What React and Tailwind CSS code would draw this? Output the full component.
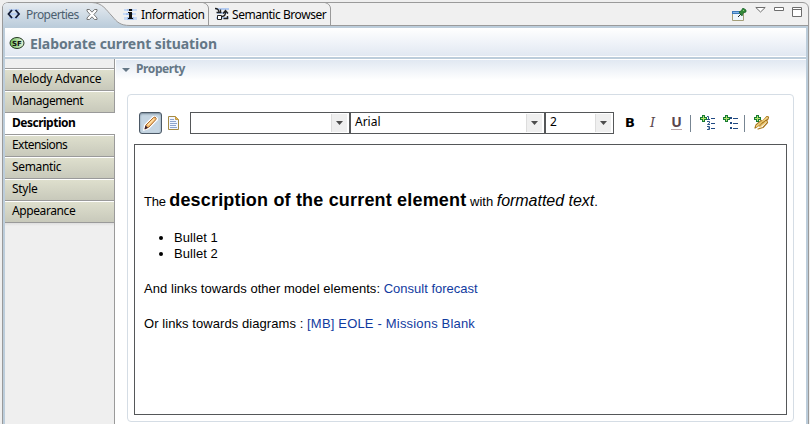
import React from "react";

const ui = "font-['Noto_Sans',sans-serif] text-black";

function CodeIcon() {
  return (
    <svg width="14" height="14" viewBox="0 0 14 14" className="shrink-0">
      <path d="M2 2h10v2H2zM1 6h12v2H1zM2 10h10v2H2z" fill="#b8cdf0" />
      <path d="M5 3L1.5 7L5 11M8.5 3L12 7L8.5 11" fill="none" stroke="#111a35" strokeWidth="1.8" />
    </svg>
  );
}

function InfoIcon() {
  return (
    <svg width="15" height="13" viewBox="0 0 15 13" className="shrink-0">
      <path d="M1 1h13v2H1zM0 5h13v2H0zM1 9h13v3H1z" fill="#c8daf6" />
      <path d="M4 1h6v2H4zM3 5h7v2H3zM4 9h7v3H4z" fill="#a5c1ee" />
      <path d="M6 1h3v2H6zM5 4h4v6h1v1H5v-1h1V5H5z" fill="#111" />
    </svg>
  );
}

function BrowserIcon() {
  return (
    <svg width="16" height="14" viewBox="0 0 16 14" className="shrink-0">
      <path d="M2 1h13v2H2zM3 5h11v2H3zM2 10h13v2H2z" fill="#b3cbf1" />
      <path d="M1 1.5C4 1.5 5 3 5 5.500M2.500 5.500H7.500M6.500 2.500V6" fill="none" stroke="#222" strokeWidth="1.300" />
      <path d="M3.500 8.500h4v4h-4z" fill="#fff" stroke="#222" />
      <path d="M8 9.500C10.500 9.500 11.500 8 11.500 5M9 6.500L11.500 3.500L14 6.500M9.500 11.500H13.500V9" fill="none" stroke="#222" strokeWidth="1.400" />
    </svg>
  );
}

function CloseIcon() {
  return (
    <svg width="12" height="11" viewBox="0 0 12 11" className="shrink-0">
      <path d="M1 .5H3.500L6 3.200L8.500 .5H11V2L7.900 5.500L11 9V10.500H8.500L6 7.800L3.500 10.500H1V9L4.100 5.500L1 2Z" fill="#fff" stroke="#6b6b6b" strokeWidth=".9" />
    </svg>
  );
}

function PinIcon() {
  return (
    <svg width="15" height="14" viewBox="0 0 15 14">
      <path d="M.5 3.500h11v9H.5z" fill="#edf6fb" stroke="#a39e78" />
      <path d="M0 3h8v3H0z" fill="#3b78ba" />
      <path d="M1 4h6v1H1z" fill="#84b8e7" />
      <path d="M6 9l3-3" stroke="#222" />
      <path d="M7 4l2-1 2-3 3 2v2l-3 1-1 3z" fill="#328a38" stroke="#145e25" strokeWidth=".7" />
      <path d="M11 2l1 1" stroke="#8bd077" />
    </svg>
  );
}

function Tabs() {
  return (
    <div className="relative h-[28px] shrink-0">
      <svg width="810" height="28" viewBox="0 0 810 28" className="absolute left-0 top-0">
        <defs>
          <linearGradient id="tab" x1="0" y1="0" x2="0" y2="1">
            <stop offset="0" stopColor="#e6ebf0" />
            <stop offset="1" stopColor="#b9cbda" />
          </linearGradient>
        </defs>
        <path d="M2.500 28V7Q3 3 7.500 2.500H803Q808 3 808.500 8V28" fill="#f0f0f0" stroke="#9a9a9a" />
        <path d="M3 28V7Q3 3 8 3H92C103 3 106 10 112 16C117 22 120 25.500 130 25.500V28Z" fill="url(#tab)" />
        <path d="M92 2.500C103 3 106 10 112 16C117 22 120 25.500 130 25.500H808" fill="none" stroke="#9a9a9a" />
        <path d="M3 26H808V28H3Z" fill="#bccddb" />
        <path d="M203 2.500Q208 4 208.500 8V25M325 2.500Q330 4 330.500 8V25" fill="none" stroke="#9a9a9a" />
      </svg>
      <div className={`relative flex h-[28px] items-center text-[12px] leading-[16px] ${ui}`}>
        <div className="ml-[7px] flex w-[116px] items-center">
          <CodeIcon />
          <span className="ml-[5px] w-[60px] whitespace-nowrap pt-px tracking-[-0.55px] text-[#4c5f70]">Properties</span>
          <CloseIcon />
        </div>
        <div className="flex w-[91px] items-center">
          <InfoIcon />
          <span className="ml-[3px] whitespace-nowrap pt-px tracking-[-0.39px]">Information</span>
        </div>
        <div className="flex items-center">
          <BrowserIcon />
          <span className="ml-[2px] whitespace-nowrap pt-px tracking-[-0.45px]">Semantic Browser</span>
        </div>
        <div className="ml-auto mr-[7px] flex h-[28px] items-start">
          <div className="mr-[8px] mt-[8px]"><PinIcon /></div>
          <svg width="48" height="12" viewBox="0 0 48 12" className="mt-[6px]">
            <path d="M.8 1.500H10.200L5.500 6Z M19.500 1.500h9v3h-9z M37.500 1.500h9v9h-9z M37.500 3.500h9" fill="#fff" stroke="#6d6d6d" />
          </svg>
        </div>
      </div>
    </div>
  );
}

const items = [
  { name: "Melody Advance", tracking: "tracking-[-0.22px]" },
  { name: "Management", tracking: "tracking-[-0.45px]" },
  { name: "Description", tracking: "tracking-[-0.5px]", selected: true },
  { name: "Extensions", tracking: "tracking-[-0.55px]" },
  { name: "Semantic", tracking: "tracking-[-0.35px]" },
  { name: "Style", tracking: "tracking-[-0.3px]" },
  { name: "Appearance", tracking: "tracking-[-0.4px]" },
];

function Sidebar() {
  return (
    <div className={`flex w-[110px] shrink-0 flex-col bg-[#efefef] text-[12px] leading-[19px] ${ui}`}>
      <div className="h-[10px] shrink-0 border-b border-r border-[#9a9a9a]" />
      {items.map(({ name, tracking, selected }) =>
        selected ? (
          <div key={name} className={`h-[22px] border-b border-b-[#9a9a9a] bg-white pl-[7px] font-bold ${tracking}`}>{name}</div>
        ) : (
          <div
            key={name}
            className={`h-[22px] whitespace-nowrap border-b border-r border-[#9a9a9a] bg-[linear-gradient(to_bottom,#fff_1px,#dedfcd_1px,#c8c9bb)] pl-[7px] ${tracking}`}
          >
            {name}
          </div>
        )
      )}
      <div className="flex-1 border-r border-[#9a9a9a] bg-[linear-gradient(to_bottom,#dedede,#efefef_3px)]" />
    </div>
  );
}

function Combo({ value, width }) {
  return (
    <div className={`flex h-[22px] shrink-0 border border-[#555759] bg-white ${width}`}>
      <span className={`flex-1 pl-[4px] text-[12px] leading-[18px] ${ui}`}>{value}</span>
      <div className="mr-[2px] mt-px flex h-[18px] w-[16px] items-center justify-center border-l border-[#ddd] bg-[#efefef]">
        <svg width="7" height="4" viewBox="0 0 7 4"><path d="M0 0H7L3.500 4Z" fill="#4c4c4c" /></svg>
      </div>
    </div>
  );
}

function Plus() {
  return (
    <>
      <path d="M2 0h3v2h2v3H5v2H2V5H0V2h2z" fill="#167b32" />
      <path d="M3 1h1v2h2v1H4v2H3V4H1V3h2z" fill="#b5e36c" />
    </>
  );
}

function Toolbar() {
  return (
    <div className="ml-[11px] mt-[17px] flex h-[22px] items-center">
      <div className="flex h-[22px] w-[23px] items-center justify-center rounded-[3px] border border-[#4b5865] bg-[#c5d5e2] shadow-[inset_0_1px_2px_#788a99]">
        <svg width="15" height="15" viewBox="0 0 15 15">
          <path d="M0 15l1-6L10 0h2l3 2v2L6 13z" fill="#fff" />
          <path d="M2 13l1-4L10.500 1.500l1.500-.5 1.200 1.300-.4 1.400L6 11z" fill="#f5bd73" stroke="#a05d22" strokeWidth=".9" />
          <path d="M5 9l6-6" stroke="#ffe3ac" strokeWidth="1.300" />
          <path d="M1.500 13.500l1-4L5 11.800z" fill="#352032" />
        </svg>
      </div>
      <svg width="11" height="14" viewBox="0 0 11 14" className="ml-[6px]">
        <path d="M.5.5H7.500L10.500 3.500V13.500H.5Z" fill="#f2f6ff" stroke="#a48a45" />
        <path d="M7.500 .5V3.500H10.500Z" fill="#e4b657" stroke="#c39a45" />
        <path d="M2 3.500h4M2 5.500h6M2 7.500h7M2 9.500h6M2 11.500h7" stroke="#8da4cc" />
      </svg>
      <div className="ml-[11px] flex">
        <Combo value="" width="w-[160px]" />
        <Combo value="Arial" width="w-[195px]" />
        <Combo value="2" width="w-[69px]" />
      </div>
      <span className="ml-[11px] w-[24px] font-['DejaVu_Sans',sans-serif] text-[13px] font-bold leading-[20px] text-black">B</span>
      <span className="w-[22px] pl-px font-['DejaVu_Serif',serif] text-[13px] italic leading-[20px] text-[#5a464d]">I</span>
      <span className="-mt-px flex h-[14px] w-[11px] justify-center border-b border-[#b9a3a6] font-['Open_Sans',sans-serif] text-[14px] font-bold leading-[12px] text-[#5a464d]">U</span>
      <div className="ml-[8px] h-[17px] w-px bg-[#778592]" />
      <svg width="16" height="16" viewBox="0 0 16 16" className="ml-[9px]">
        <path d="M7 1.500h1.500V4M7 4.500h3M7 6.500h2.500V8L7.500 9.500H10M7 11.500h2.500v3H7M8 13h1.500" fill="none" stroke="#2d5588" />
        <path d="M11 3.500h4M11 8.500h4M11 13.500h4" stroke="#204982" />
        <Plus />
      </svg>
      <svg width="16" height="16" viewBox="0 0 16 16" className="ml-[7px]">
        <path d="M7 2h2v2H7zM7 7h2v2H7zM7 12h2v2H7z" fill="#204982" />
        <path d="M10 3.500h5M10 8.500h5M10 13.500h5" stroke="#204982" />
        <Plus />
      </svg>
      <div className="ml-[5px] h-[17px] w-px bg-[#778592]" />
      <svg width="16" height="16" viewBox="0 0 16 16" className="ml-[9px]">
        <g fill="none" strokeLinecap="round" strokeLinejoin="round">
          <path d="M4 14L9 12.500L13.500 7.500L12.500 5L8 8M1 13L2 10L7 5.500L8.500 7L4 11Z" stroke="#a8751a" strokeWidth="1.200" />
          <path d="M5 10L13 1.500L14.500 2L14 4L6 11.500" stroke="#a8751a" strokeWidth="1.200" />
          <path d="M2.500 11.500L13 2.500M6 12L12 6.500" stroke="#f4cf70" strokeWidth="1.100" />
        </g>
        <Plus />
      </svg>
    </div>
  );
}

function Editor() {
  return (
    <div className="ml-[6px] mt-[10px] h-[271px] w-[653px] border border-[#555759] bg-white pl-[9px] pt-[43px] font-['Liberation_Sans',Arial,sans-serif] text-[13px] text-black">
      <div className="h-[24px] whitespace-nowrap leading-[24px]">
        <span className="tracking-[-0.2px]">The </span><b className="text-[18px] tracking-[0.18px]">description of the current element</b><span> with </span><i className="text-[16px] tracking-[-0.03px]">formatted text</i>.
      </div>
      <ul className="mt-[18px] list-disc pl-[30px] leading-[16px] tracking-[0.07px]">
        <li>Bullet 1</li>
        <li>Bullet 2</li>
      </ul>
      <p className="mt-[18px] whitespace-nowrap leading-[18px]">
        <span className="tracking-[0.05px]">And links towards other model elements: </span><a className="text-[#113ba0]">Consult forecast</a>
      </p>
      <p className="mt-[17px] whitespace-nowrap leading-[18px]">
        <span className="tracking-[0.07px]">Or links towards diagrams : </span><a className="tracking-[0.18px] text-[#113ba0]">[MB] EOLE - Missions Blank</a>
      </p>
    </div>
  );
}

export default function App() {
  return (
    <div className="flex h-[424px] w-[810px] flex-col overflow-hidden bg-[#efefef]">
      <Tabs />
      <div className="ml-[2px] flex w-[807px] flex-1 flex-col border-l border-r border-[#9a9a9a]">
        <div className="flex flex-1 flex-col border-x-2 border-[#bccddb] bg-white">
          <div className="flex h-[28px] shrink-0 items-center bg-[linear-gradient(to_bottom,#fff,#e1e8f2)] pl-[4px]">
            <svg width="16" height="14" viewBox="0 0 16 14" className="mt-[2px]">
              <defs>
                <linearGradient id="sf" x1="0" y1="0" x2="1" y2="0">
                  <stop offset="0" stopColor="#6fbf5c" />
                  <stop offset="1" stopColor="#e4f4dc" />
                </linearGradient>
              </defs>
              <ellipse cx="8" cy="7" rx="7" ry="5.500" fill="url(#sf)" stroke="#263924" />
              <text x="8" y="9.800" textAnchor="middle" fontFamily="DejaVu Sans" fontWeight="700" fontSize="7" fill="#111">SF</text>
            </svg>
            <h1 className="ml-[5px] mt-[3px] whitespace-nowrap font-['Noto_Sans',sans-serif] text-[14px] font-bold leading-[20px] tracking-[-0.08px] text-[#647786]">Elaborate current situation</h1>
          </div>
          <div className="mt-px h-[2px] shrink-0 bg-[#bccddb]" />
          <div className="flex h-[365px] shrink-0">
            <Sidebar />
            <div className="flex min-w-0 flex-1 flex-col border-l border-t border-white bg-[linear-gradient(to_bottom,#e1e8f2,#fff_20px)]">
              <div className="flex h-[20px] items-center pl-[6px]">
                <svg width="8" height="4" viewBox="0 0 8 4" className="-mt-px"><path d="M0 0H8L4 4Z" fill="#647786" /></svg>
                <h2 className="ml-[6px] -mt-[2px] font-['Noto_Sans',sans-serif] text-[12px] font-bold leading-[18px] tracking-[-0.4px] text-[#647786]">Property</h2>
              </div>
              <div className="ml-[11px] mt-[14px] h-[328px] w-[667px] rounded-[4px] border border-[#d5dde5]">
                <Toolbar />
                <Editor />
              </div>
            </div>
          </div>
        </div>
      </div>
    </div>
  );
}
